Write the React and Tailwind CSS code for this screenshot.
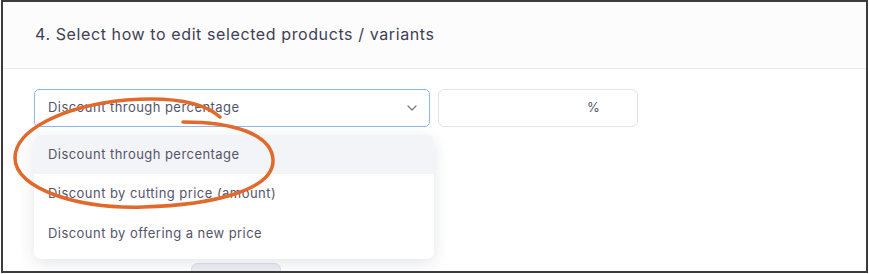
import React from "react";

export default function App() {
  const font = { fontFamily: "Inter, 'Noto Sans', sans-serif" };
  return (
    <div className="w-[869px] h-[274px] bg-white overflow-hidden" style={font}>
      <div className="ml-[1px] w-[867px] h-[273px] border-2 border-[#3c3c3c] bg-white overflow-hidden relative">
        <div className="h-[67px] border-b border-[#e7e7ef] bg-[#fcfcfd] flex items-center pl-[32px] pb-[2px]">
          <h2 className="text-[16px] text-[#3f3f55] tracking-[0.6px]">
            4. Select how to edit selected products / variants
          </h2>
        </div>
        <div className="pt-[20px] pl-[31px] relative">
          <div className="flex gap-[8px]">
            <div className="w-[396px] h-[38px] border border-[#8db6ee] rounded-[5px] flex items-center justify-between pl-[13px] pr-[12px] bg-white">
              <span className="text-[13px] text-[#55556a] tracking-[0.45px]">Discount through percentage</span>
              <svg width="10" height="6" viewBox="0 0 10 6" fill="none">
                <path d="M1 1l4 4 4-4" stroke="#777" strokeWidth="1.2" strokeLinecap="round" strokeLinejoin="round" />
              </svg>
            </div>
            <div className="w-[200px] h-[38px] border border-[#e2e2ea] rounded-[6px] flex items-center pl-[148px] bg-white">
              <span className="text-[13px] text-[#55556a]">%</span>
            </div>
          </div>
          <div className="mt-[136px] ml-[157px] w-[90px] h-[20px] bg-[#eceef3] border border-[#e0e2e8] rounded-[6px]"></div>
          <div className="absolute left-[31px] top-[66px] w-[400px] bg-white rounded-[7px] shadow-[0_4px_16px_rgba(30,40,70,0.12)] pb-[5px] overflow-hidden">
            <div className="h-[39px] bg-[#f2f4f7] flex items-center pl-[14px] text-[13px] text-[#55556a] tracking-[0.45px]">Discount through percentage</div>
            <div className="h-[40px] flex items-center pl-[14px] text-[13px] text-[#55556a] tracking-[0.45px]">Discount by cutting price (amount)</div>
            <div className="h-[40px] flex items-center pl-[14px] text-[13px] text-[#55556a] tracking-[0.45px]">Discount by offering a new price</div>
          </div>
        </div>
        <svg className="absolute left-[-2px] top-[-2px] pointer-events-none" width="869" height="274" viewBox="0 0 869 274" fill="none">
          <path
            d="M219 117 C 200 100, 165 97, 125 100 C 62 106, 14 130, 14 158 C 14 190, 80 209, 142 207 C 212 205, 273 190, 272 160 C 271 134, 232 122, 182 122"
            stroke="#e2692c"
            strokeWidth="3.5"
            strokeLinecap="round"
            fill="none"
          />
        </svg>
      </div>
    </div>
  );
}
